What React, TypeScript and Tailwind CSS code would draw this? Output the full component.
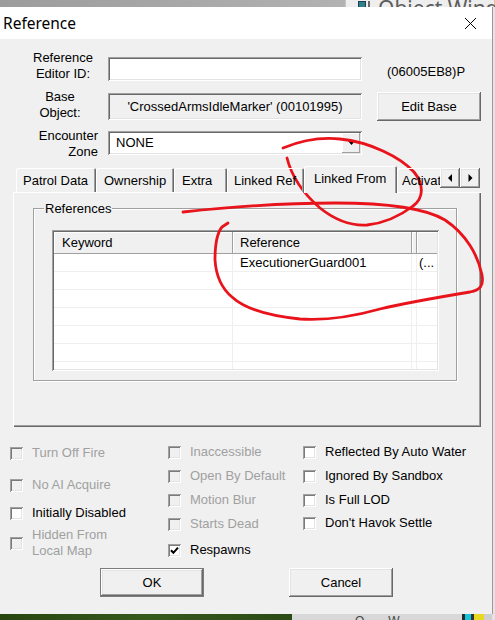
import React from "react";

const raised =
  "shadow-[inset_-1px_-1px_0_#696969,inset_1px_1px_0_#ffffff,inset_-2px_-2px_0_#a0a0a0,inset_2px_2px_0_#e3e3e3]";
const sunken =
  "shadow-[inset_1px_1px_0_#a0a0a0,inset_-1px_-1px_0_#ffffff,inset_2px_2px_0_#696969,inset_-2px_-2px_0_#e3e3e3]";
const boxSunken =
  "shadow-[inset_1px_1px_0_#a0a0a0,inset_-1px_-1px_0_#ffffff,inset_2px_2px_0_#7a7a7a,inset_-2px_-2px_0_#e3e3e3]";

function Check({
  label,
  disabled,
  checked,
  mt,
}: {
  label: React.ReactNode;
  disabled?: boolean;
  checked?: boolean;
  mt: string;
}) {
  return (
    <div className={`flex items-center gap-[9px] ${mt}`}>
      <div
        className={`w-[13px] h-[13px] shrink-0 ${boxSunken} ${
          disabled ? "bg-[#f0f0f0]" : "bg-white"
        } flex items-center justify-center`}
      >
        {checked && (
          <svg width="13" height="13" viewBox="0 0 13 13">
            <path d="M3 6.2 L5.4 8.8 L10 3.6" stroke="#000" strokeWidth="2" fill="none" />
          </svg>
        )}
      </div>
      <div className={disabled ? "text-[#a0a0a0]" : "text-black"}>{label}</div>
    </div>
  );
}

function Tab({ w, pl, children }: { w: string; pl: string; children: React.ReactNode }) {
  return (
    <div
      className={`${w} ${pl} mt-[2px] h-[24px] shrink-0 flex items-center pt-[1px] whitespace-nowrap overflow-hidden rounded-t-[2px] shadow-[inset_1px_1px_0_#ffffff,inset_-1px_0_0_#696969,inset_-2px_0_0_#a0a0a0]`}
    >
      {children}
    </div>
  );
}

export default function App() {
  return (
    <div className="relative w-[495px] h-[620px] overflow-hidden bg-[#d4d4d4] font-['Liberation_Sans',Arial,sans-serif] text-[13px] leading-[16px] text-black">
      {/* background window strip on top */}
      <div className="flex h-[7px] overflow-hidden">
        <div className="w-[345px] shrink-0 h-full bg-gradient-to-r from-[#9c9c9c] to-[#b2b2b2]" />
        <div className="w-[150px] shrink-0 h-full bg-[#eeeeee] flex items-start border-l border-[#c4c4c4] overflow-hidden">
          <div className="ml-[12px] mt-[1px] w-[8px] h-[10px] shrink-0 bg-[#2f7f86] border border-[#1d3f5a]" />
          <div className="ml-[2px] mt-[1px] w-[2px] h-[10px] shrink-0 bg-[#6a6a6a]" />
          <span className="ml-[8px] mt-[-2px] text-[21px] leading-[20px] text-[#5c5c5c] font-['Noto_Sans',sans-serif] whitespace-nowrap">
            Object Window
          </span>
        </div>
      </div>

      <div className="flex h-[607px]">
        {/* dialog */}
        <div className="w-[492px] shrink-0 h-full flex flex-col bg-[#f0f0f0]">
          {/* title bar */}
          <div className="h-[32px] bg-white flex items-center justify-between pl-[3px] pr-[15px]">
            <span className="font-['Noto_Sans',sans-serif] text-[15.5px] leading-[20px]">Reference</span>
            <svg width="13" height="13" viewBox="0 0 13 13">
              <path d="M1 1 L12 12 M12 1 L1 12" stroke="#000" strokeWidth="1" fill="none" />
            </svg>
          </div>

          {/* body */}
          <div className="flex flex-col pt-[11px]">
            {/* row 1 */}
            <div className="flex h-[39px]">
              <div className="ml-[30px] w-[66px] text-center">
                Reference
                <br />
                Editor ID:
              </div>
              <div className={`ml-[12px] mt-[7px] w-[254px] h-[24px] bg-white ${sunken}`} />
              <div className="ml-[25px] mt-[14px]">(06005EB8)P</div>
            </div>

            {/* row 2 */}
            <div className="flex h-[39px]">
              <div className="ml-[30px] w-[60px] text-center">
                Base
                <br />
                Object:
              </div>
              <div
                className={`ml-[18px] mt-[4px] w-[254px] h-[27px] flex items-center justify-center ${sunken}`}
              >
                'CrossedArmsIdleMarker' (00101995)
              </div>
              <div
                className={`ml-[15px] mt-[3px] w-[104px] h-[29px] flex items-center justify-center ${raised}`}
              >
                Edit Base
              </div>
            </div>

            {/* row 3 */}
            <div className="flex h-[38px]">
              <div className="w-[98px] text-right">
                Encounter
                <br />
                Zone
              </div>
              <div
                className={`ml-[10px] mt-[3px] w-[254px] h-[24px] bg-white ${sunken} flex items-center pl-[8px] pr-[2px]`}
              >
                <span className="flex-1">NONE</span>
                <div className="w-[18px] h-[20px] bg-[#f0f0f0] shadow-[inset_-1px_-1px_0_#a0a0a0,inset_1px_1px_0_#ffffff] flex items-center justify-center">
                  <svg width="7" height="4" viewBox="0 0 7 4">
                    <path d="M0 0 L7 0 L3.5 4 Z" fill="#000" />
                  </svg>
                </div>
              </div>
            </div>

            {/* tabs */}
            <div className="relative z-10 flex h-[27px] -mb-[1px] pl-[16px]">
              <div className="flex w-[424px] h-[27px] overflow-hidden items-start">
                <Tab w="w-[80px]" pl="pl-[7px]">Patrol Data</Tab>
                <Tab w="w-[78px]" pl="pl-[8px]">Ownership</Tab>
                <Tab w="w-[53px]" pl="pl-[8px]">Extra</Tab>
                <Tab w="w-[77px]" pl="pl-[7px]">Linked Ref</Tab>
                <div className="w-[93px] h-[27px] shrink-0 pl-[10px] pb-[2px] flex items-center bg-[#f0f0f0] rounded-t-[2px] shadow-[inset_1px_1px_0_#ffffff,inset_-1px_0_0_#696969,inset_-2px_0_0_#a0a0a0]">
                  Linked From
                </div>
                <Tab w="w-[60px]" pl="pl-[5px]">Activate Parents</Tab>
              </div>
              <div className="flex mt-[2px] h-[20px]">
                <div className={`w-[20px] h-[20px] bg-[#f0f0f0] ${raised}`}>
                  <svg width="20" height="20" viewBox="0 0 20 20">
                    <path d="M12 6 L12 14 L8 10 Z" fill="#000" />
                  </svg>
                </div>
                <div className={`w-[20px] h-[20px] bg-[#f0f0f0] ${raised}`}>
                  <svg width="20" height="20" viewBox="0 0 20 20">
                    <path d="M8.5 6 L8.5 14 L12.5 10 Z" fill="#000" />
                  </svg>
                </div>
              </div>
            </div>

            {/* tab panel */}
            <div className="ml-[13px] w-[468px] h-[235px] flex flex-col shadow-[inset_1px_1px_0_#ffffff,inset_-1px_-1px_0_#696969,inset_-2px_-2px_0_#a0a0a0]">
              <div className="relative ml-[20px] mt-[16px] w-[424px] h-[173px] flex flex-col border border-[#a0a0a0] shadow-[inset_1px_1px_0_#ffffff,1px_1px_0_#ffffff]">
                <div className="absolute left-[10px] top-[-8px] px-[1px] bg-[#f0f0f0]">References</div>

                {/* list view */}
                <div className={`ml-[18px] mt-[21px] w-[387px] h-[141px] bg-white p-[2px] ${sunken}`}>
                  <div className="w-full h-full overflow-hidden flex flex-col">
                    <div className="flex h-[22px] shrink-0 bg-[#f0f0f0] border-b border-[#a0a0a0]">
                      <div className="w-[179px] pl-[8px] flex items-center border-r border-[#a0a0a0] shadow-[inset_1px_1px_0_#ffffff]">
                        Keyword
                      </div>
                      <div className="w-[179px] pl-[7px] flex items-center border-r border-[#a0a0a0] shadow-[inset_1px_1px_0_#ffffff]">
                        Reference
                      </div>
                      <div className="w-[5px] border-r border-[#a0a0a0] shadow-[inset_1px_1px_0_#ffffff]" />
                      <div className="flex-1 shadow-[inset_1px_1px_0_#ffffff]" />
                    </div>
                    {[0, 1, 2, 3, 4, 5, 6].map((i) => (
                      <div key={i} className="flex h-[18px] shrink-0 border-b border-[#efefef]">
                        <div className="w-[179px] border-r border-[#efefef]" />
                        <div className="w-[179px] pl-[7px] flex items-center border-r border-[#efefef] whitespace-nowrap">
                          {i === 0 ? "ExecutionerGuard001" : ""}
                        </div>
                        <div className="w-[5px] border-r border-[#efefef]" />
                        <div className="flex-1 pl-[2px] flex items-center whitespace-nowrap overflow-hidden">
                          {i === 0 ? "(..." : ""}
                        </div>
                      </div>
                    ))}
                  </div>
                </div>
              </div>
            </div>

            {/* checkboxes */}
            <div className="flex mt-[17px] h-[115px]">
              <div className="ml-[10px] w-[158px] flex flex-col">
                <Check mt="mt-[1px]" disabled label="Turn Off Fire" />
                <Check mt="mt-[16px]" disabled label="No AI Acquire" />
                <Check mt="mt-[12px]" label="Initially Disabled" />
                <Check
                  mt="mt-[6px]"
                  disabled
                  label={
                    <>
                      Hidden From
                      <br />
                      Local Map
                    </>
                  }
                />
              </div>
              <div className="w-[135px] flex flex-col">
                <Check mt="mt-0" disabled label="Inaccessible" />
                <Check mt="mt-[8px]" disabled label="Open By Default" />
                <Check mt="mt-[8px]" disabled label="Motion Blur" />
                <Check mt="mt-[8px]" disabled label="Starts Dead" />
                <Check mt="mt-[10px]" checked label="Respawns" />
              </div>
              <div className="flex-1 flex flex-col">
                <Check mt="mt-0" label="Reflected By Auto Water" />
                <Check mt="mt-[8px]" label="Ignored By Sandbox" />
                <Check mt="mt-[8px]" label="Is Full LOD" />
                <Check mt="mt-[7px]" label="Don't Havok Settle" />
              </div>
            </div>

            {/* buttons */}
            <div className="flex mt-[9px] pl-[100px] gap-[85px]">
              <div
                className={`w-[104px] h-[29px] flex items-center justify-center border border-[#7c7c7c] ${raised}`}
              >
                OK
              </div>
              <div className={`w-[104px] h-[29px] flex items-center justify-center ${raised}`}>Cancel</div>
            </div>
          </div>
        </div>
        <div className="w-[3px] shrink-0 h-full bg-[#e4e4e4] border-l border-[#9a9a9a]" />
      </div>

      {/* bottom background strip */}
      <div className="flex h-[6px] overflow-hidden">
        <div className="w-[292px] shrink-0 h-full bg-gradient-to-r from-[#27460f] via-[#36591c] to-[#2b4b15]" />
        <div className="w-[170px] shrink-0 h-full bg-[#d8d8d8] flex items-start overflow-hidden">
          <span className="ml-[63px] mt-[1px] text-[12px] leading-[12px] text-[#444]">O...</span>
          <span className="ml-[14px] mt-[1px] text-[12px] leading-[12px] text-[#444]">W...</span>
        </div>
        <div className="w-[30px] shrink-0 h-full bg-[#cfcfcf] flex items-start">
          <div className="w-[3px] h-full bg-[#2a2a2a]" />
          <div className="w-[6px] h-full bg-[#15c4d8]" />
          <div className="w-[3px] h-full bg-[#333]" />
          <div className="w-[10px] h-full bg-[#e8d820]" />
        </div>
        <div className="w-[3px] shrink-0 h-full bg-[#e4e4e4]" />
      </div>

      {/* red hand-drawn annotations */}
      <svg
        className="absolute left-0 top-0 pointer-events-none"
        width="495"
        height="620"
        viewBox="0 0 495 620"
        fill="none"
      >
        <path
          d="M283 148 C300 141 320 137 340 139 C370 142 400 157 414 172 C424 184 424 198 413 206 C400 216 385 223 367 225 C350 226 335 220 320 208 C305 195 292 178 287 158"
          stroke="#e8131b"
          strokeWidth="2.8"
          strokeLinecap="round"
          strokeLinejoin="round"
        />
        <path
          d="M183 212 C230 207 290 203 335 203 C385 203 425 208 445 220 C466 234 478 255 482 275 C484 286 480 290 470 292 C440 297 405 303 380 309 C355 316 330 321 300 319 C270 316 245 309 232 297 C220 287 216 275 215 260 C215 245 217 233 222 227 L228 223"
          stroke="#e8131b"
          strokeWidth="2.8"
          strokeLinecap="round"
          strokeLinejoin="round"
        />
      </svg>
    </div>
  );
}
